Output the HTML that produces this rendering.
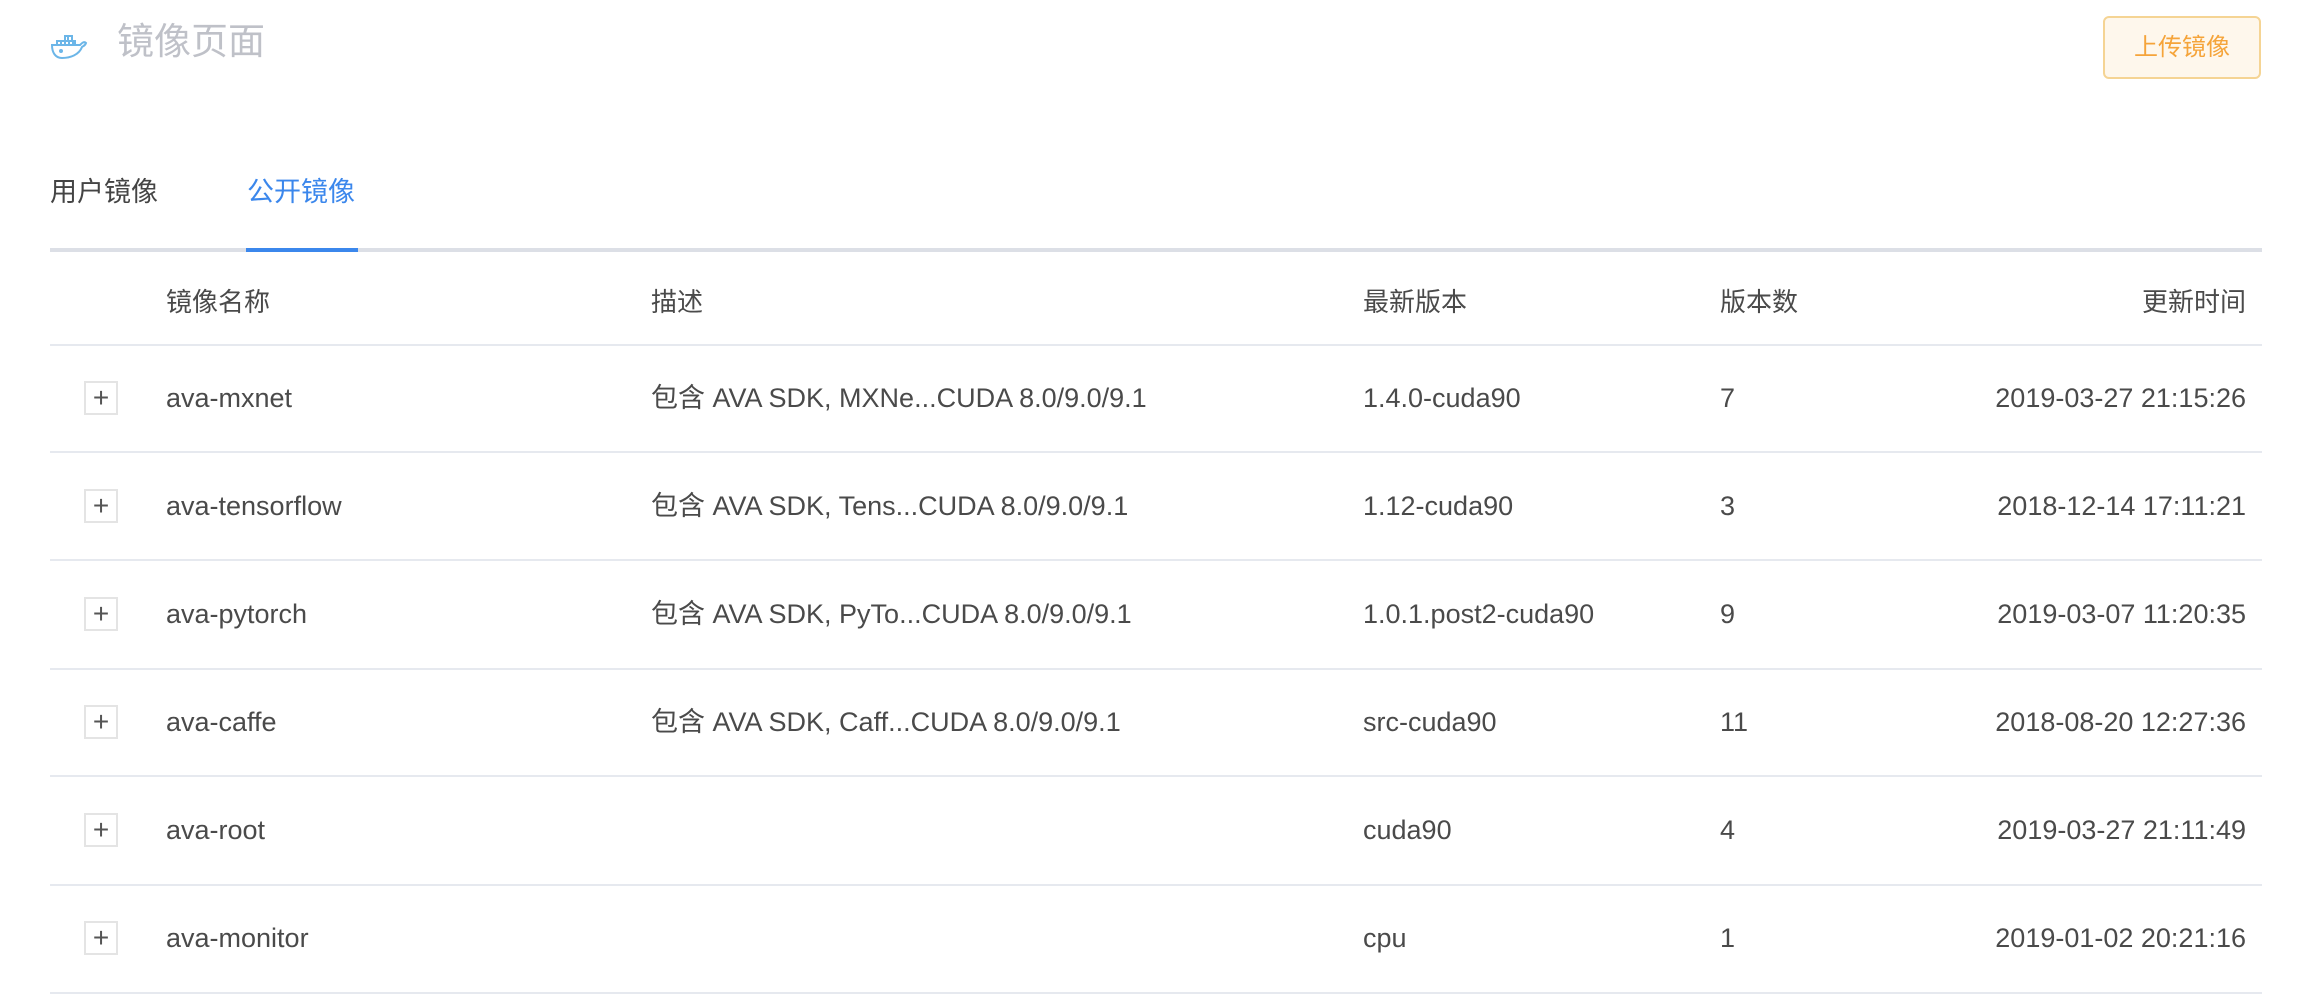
<!DOCTYPE html>
<html><head><meta charset="utf-8"><style>
body{margin:0;width:2298px;height:1000px;background:#fff;font-family:"Liberation Sans","Noto Sans CJK SC",sans-serif;color:#4a4a4a;position:relative;overflow:hidden}
.a{position:absolute;white-space:nowrap}
.hl{position:absolute;left:50px;width:2212px;height:2px;background:#e6e9ef}
.r{position:absolute;left:0;width:2298px;height:108px;font-size:27px}
.r div{position:absolute;top:0;line-height:108px;white-space:nowrap}
.r .pb{position:absolute;left:84px;top:37px;width:30px;height:30px;border:2px solid #e4e4e4;line-height:30px;text-align:center;font-size:28px;color:#555}
</style></head><body>
<svg class="a" style="left:50px;top:32px" width="38" height="28" viewBox="0 0 38 28" fill="none" stroke="#6cb6e8" stroke-width="2">
<path d="M2 13 H30 C32 11 34 9 36 11 C35 14 33 14 32 15 C29 23 20 26 12 26 C5 26 2 20 2 13Z"/>
<path d="M7 13V9H25V13M11 9V13M15 9V13M19 9V13M23 9V13M15 9V4H22V9M18 4V9"/>
<circle cx="11" cy="19" r="1" fill="#6cb6e8"/>
</svg>
<div class="a" style="left:117px;top:19px;font-size:37px;line-height:46px;color:#bfc1c8">镜像页面</div>
<div class="a" style="left:2103px;top:16px;width:154px;height:59px;border:2px solid #f5d494;border-radius:6px;background:#fef7ec;color:#f5a43a;font-size:24px;line-height:59px;text-align:center">上传镜像</div>
<div class="a" style="left:50px;top:174px;font-size:27px;line-height:36px;color:#444">用户镜像</div>
<div class="a" style="left:247px;top:174px;font-size:27px;line-height:36px;color:#3b87ec">公开镜像</div>
<div class="a" style="left:50px;top:248px;width:2212px;height:4px;background:#dcdfe6"></div>
<div class="a" style="left:246px;top:248px;width:112px;height:4px;background:#3b87ec"></div>
<div class="r" style="top:260px;height:84px;font-size:26px">
<div style="left:166px;line-height:84px">镜像名称</div><div style="left:651px;line-height:84px">描述</div><div style="left:1363px;line-height:84px">最新版本</div><div style="left:1720px;line-height:84px">版本数</div><div style="right:52px;line-height:84px">更新时间</div></div>
<div class="hl" style="top:344px"></div>
<div class="r" style="top:344px"><div class="pb">+</div><div style="left:166px">ava-mxnet</div><div style="left:651px">包含 AVA SDK, MXNe...CUDA 8.0/9.0/9.1</div><div style="left:1363px">1.4.0-cuda90</div><div style="left:1720px">7</div><div style="right:52px">2019-03-27 21:15:26</div></div>
<div class="hl" style="top:451px"></div>
<div class="r" style="top:452px"><div class="pb">+</div><div style="left:166px">ava-tensorflow</div><div style="left:651px">包含 AVA SDK, Tens...CUDA 8.0/9.0/9.1</div><div style="left:1363px">1.12-cuda90</div><div style="left:1720px">3</div><div style="right:52px">2018-12-14 17:11:21</div></div>
<div class="hl" style="top:559px"></div>
<div class="r" style="top:560px"><div class="pb">+</div><div style="left:166px">ava-pytorch</div><div style="left:651px">包含 AVA SDK, PyTo...CUDA 8.0/9.0/9.1</div><div style="left:1363px">1.0.1.post2-cuda90</div><div style="left:1720px">9</div><div style="right:52px">2019-03-07 11:20:35</div></div>
<div class="hl" style="top:668px"></div>
<div class="r" style="top:668px"><div class="pb">+</div><div style="left:166px">ava-caffe</div><div style="left:651px">包含 AVA SDK, Caff...CUDA 8.0/9.0/9.1</div><div style="left:1363px">src-cuda90</div><div style="left:1720px">11</div><div style="right:52px">2018-08-20 12:27:36</div></div>
<div class="hl" style="top:775px"></div>
<div class="r" style="top:776px"><div class="pb">+</div><div style="left:166px">ava-root</div><div style="left:1363px">cuda90</div><div style="left:1720px">4</div><div style="right:52px">2019-03-27 21:11:49</div></div>
<div class="hl" style="top:884px"></div>
<div class="r" style="top:884px"><div class="pb">+</div><div style="left:166px">ava-monitor</div><div style="left:1363px">cpu</div><div style="left:1720px">1</div><div style="right:52px">2019-01-02 20:21:16</div></div>
<div class="hl" style="top:992px"></div>
</body></html>
